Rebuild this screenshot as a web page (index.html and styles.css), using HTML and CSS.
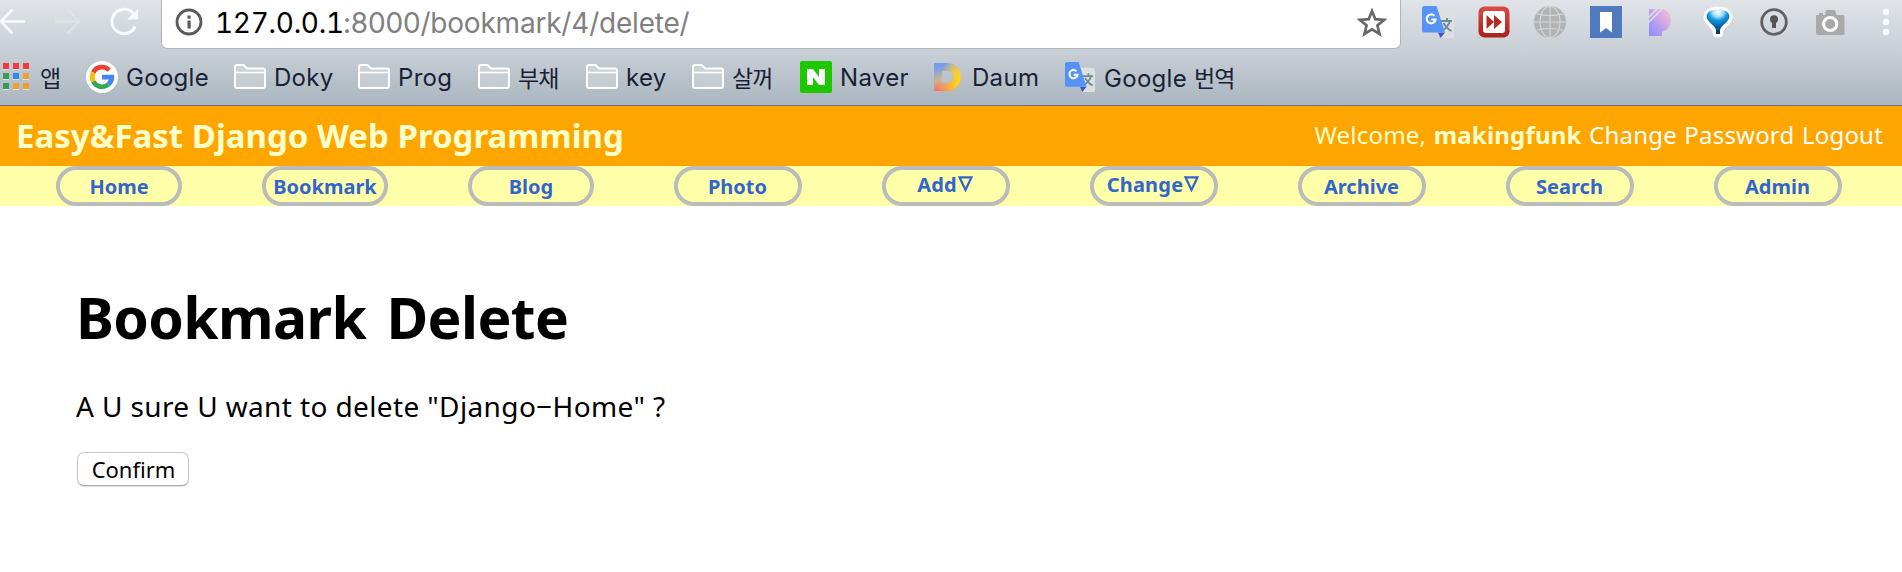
FILE: index.html
```
<!DOCTYPE html>
<html lang="ko">
<head>
<meta charset="utf-8">
<title>Bookmark Delete</title>
<link rel="stylesheet" href="styles.css">
</head>
<body>
<svg width="0" height="0" class="defs">
  <defs>
    <linearGradient id="gDaum" x1="0" y1="0" x2="0.35" y2="1"><stop offset=".15" stop-color="#6f9cf8"/><stop offset=".6" stop-color="#c9b58f"/><stop offset="1" stop-color="#ff5f5f"/></linearGradient>
    <linearGradient id="gDaum2" x1="0" y1="0" x2="1" y2=".3"><stop offset=".35" stop-color="#ffdc3c" stop-opacity="0"/><stop offset="1" stop-color="#ffd21c"/></linearGradient>
    <linearGradient id="gP" x1="1" y1="0" x2="0" y2="1"><stop offset=".15" stop-color="#f3b4dc"/><stop offset=".9" stop-color="#9290fb"/></linearGradient>
    <linearGradient id="gRed" x1="0" y1="0" x2="0" y2="1"><stop offset="0" stop-color="#dd4b43"/><stop offset="1" stop-color="#a9201b"/></linearGradient>
    <radialGradient id="gBall" cx=".5" cy=".12" r=".75"><stop offset="0" stop-color="#fff"/><stop offset=".3" stop-color="#a9defa"/><stop offset=".55" stop-color="#1298e0"/><stop offset="1" stop-color="#04599d"/></radialGradient>
    <symbol id="folder" viewBox="0 0 32 25"><path d="M1 3Q1 1 3 1H9.500L13 4.500H29Q31 4.500 31 6.500V22Q31 24 29 24H3Q1 24 1 22Z" fill="#fff" fill-opacity=".2" stroke="#fff" stroke-width="2"/><path d="M1 8.500H31" stroke="#fff" stroke-width="1.600"/></symbol>
    <symbol id="translate" viewBox="0 0 32 32"><path d="M14 6H30Q32 6 32 8V30Q32 32 30 32H19Z" fill="#dde0e1"/><path d="M19 15H30M25 12V15M28 15Q26 21 20 25M21.500 17Q25 23 29.500 25" fill="none" stroke="#6d8b92" stroke-width="1.900"/><path d="M16 26.500H23L18.500 32Z" fill="#3f54bf"/><path d="M2 0H14.500L23 26.500H2Q0 26.500 0 24.500V2Q0 0 2 0Z" fill="#5594f5"/><path d="M12.300 9.800A4.400 4.400 0 1 0 13.500 13.500H9.300" fill="none" stroke="#fff" stroke-width="2.200"/></symbol>
  </defs>
</svg>
<header class="browser">
  <div class="toolbar">
    <svg class="navs" width="162" height="49" viewBox="0 0 162 49" fill="none" stroke-width="2.600" stroke="#f8fafb"><path d="M25 21.500H1M12.500 9.500L.800 21.500L12.500 33.500"/><g stroke="#dfe3e6"><path d="M55 21.500H79M67.500 9.500L79.200 21.500L67.500 33.500"/></g><path d="M134.500 15A12.200 12.200 0 1 0 135.200 26.500" stroke-width="3"/><path d="M138 9V19.500H127Z" fill="#f8fafb" stroke="none"/></svg>
    <div class="omnibox">
      <svg class="info" width="28" height="28" viewBox="0 0 28 28"><circle cx="14" cy="14" r="12" fill="none" stroke="#5a5a5a" stroke-width="2.800"/><path d="M12.500 7.500h3.200v3.200h-3.200zM12.500 12.500h3.200v8h-3.200z" fill="#5a5a5a"/></svg>
      <span class="url"><span class="host">127.0.0.1</span><span class="path">:8000/bookmark/4/delete/</span></span>
      <svg class="star" width="30" height="29" viewBox="0 0 30 29"><path d="M15 3L18.300 11.200L27.200 11.800L20.400 17.500L22.600 26L15 21.300L7.400 26L9.600 17.500L2.800 11.800L11.700 11.200Z" fill="none" stroke="#686868" stroke-width="2.700"/></svg>
    </div>
    <div class="extensions">
      <svg width="32" height="32"><use href="#translate"/></svg>
      <svg width="32" height="32" viewBox="0 0 32 32"><rect x=".5" y=".5" width="31" height="31" rx="6" fill="url(#gRed)"/><rect x="5" y="5" width="22" height="22" rx="3" fill="#fff"/><path d="M8.500 9L16 16L8.500 23ZM16 9L24 16L16 23Z" fill="#b52c27"/></svg>
      <svg width="32" height="32" viewBox="0 0 32 32"><circle cx="16" cy="16" r="16" fill="#b3b3b3"/><g fill="none" stroke="#d5d9dc" stroke-width="1.100"><path d="M16 0V32M0 16H32M3 8Q16 11 29 8M3 24Q16 21 29 24"/><ellipse cx="16" cy="16" rx="10" ry="15.500"/></g></svg>
      <svg width="32" height="32" viewBox="0 0 32 32"><rect width="32" height="32" fill="#4f7abd"/><path d="M10 6H22V26.500L16 22L10 26.500Z" fill="#fff"/></svg>
      <svg width="32" height="32" viewBox="0 0 32 32"><path d="M3 3H17A12 12 0 0 1 17 25.500H16V30H3Z" fill="url(#gP)"/><path d="M2.500 11.500L11.500 2.500M2.500 16.500L16.500 2.500" stroke="#dde2e6" stroke-width="1.500"/></svg>
      <svg width="32" height="32" viewBox="0 0 32 32"><path d="M1.500 11.500C2 4 8 .500 16 .500S30 4 30.500 11.500C30.500 18 21 21 21 28Q20.500 31.500 16 31.500Q12 31.500 11 28C11 21 1.500 18 1.500 11.500Z" fill="#fff"/><path d="M4.500 10C5.500 5 10 3.500 16 3.500S26.500 5 27.500 10C27.500 16 19 19 18 24H14C13 19 4.500 16 4.500 10Z" fill="url(#gBall)"/><path d="M14 24H18V28H14Z" fill="#123b5c"/></svg>
      <svg width="32" height="32" viewBox="0 0 32 32"><circle cx="16" cy="16" r="12.300" fill="none" stroke="#616161" stroke-width="2.800"/><circle cx="16" cy="13.300" r="4" fill="#555"/><path d="M14 14H18V22H14Z" fill="#555"/></svg>
      <svg width="32" height="32" viewBox="0 0 32 32"><path d="M3 9H5V7H9V9H11L12 4H21L22.500 9H29Q30.500 9 30.500 11V27Q30.500 29 29 29H3.500Q2 29 2 27V10Q2 9 3 9Z" fill="#a9a9a9"/><circle cx="16.200" cy="18" r="6.600" fill="#a9a9a9" stroke="#fff" stroke-width="3"/></svg>
      <svg width="32" height="32" viewBox="0 0 32 32" fill="#f8fafb"><circle cx="16" cy="6" r="3.200"/><circle cx="16" cy="16" r="3.200"/><circle cx="16" cy="26" r="3.200"/></svg>
    </div>
  </div>
  <nav class="bookmarks">
    <a class="mark apps"><svg width="27" height="27" viewBox="0 0 27 27"><g fill="#e1e5e8"><path d="M0 1h6v6H0zM10 1h6v6h-6zM20 1h6v6h-6zM0 11h6v6H0zM10 11h6v6h-6zM20 11h6v6h-6zM0 21h6v6H0zM10 21h6v6h-6zM20 21h6v6h-6z"/></g><path d="M0 0h6v6H0zM10 0h6v6h-6zM20 0h6v6h-6z" fill="#f43b3b"/><path d="M0 10h6v6H0zM0 20h6v6H0z" fill="#3b9b5b"/><path d="M10 10h6v6h-6z" fill="#2a8bf2"/><path d="M20 10h6v6h-6zM10 20h6v6h-6zM20 20h6v6h-6z" fill="#f0a12b"/></svg><span class="ko">앱</span></a>
    <a class="mark google"><svg width="32" height="32" viewBox="0 0 32 32"><circle cx="16" cy="16" r="16" fill="#fff"/><g fill="none" stroke-width="4.800"><path d="M23.200 9.200A9.800 9.800 0 0 0 7.300 11.500" stroke="#ea4335"/><path d="M7.300 11.500A9.800 9.800 0 0 0 7.300 20.500" stroke="#fbbc05"/><path d="M7.300 20.500A9.800 9.800 0 0 0 22.300 23.500" stroke="#34a853"/><path d="M22.300 23.500A9.800 9.800 0 0 0 25.800 16.200H16" stroke="#4285f4"/></g></svg><span>Google</span></a>
    <a class="mark doky"><svg width="32" height="25"><use href="#folder"/></svg><span>Doky</span></a>
    <a class="mark prog"><svg width="32" height="25"><use href="#folder"/></svg><span>Prog</span></a>
    <a class="mark debt"><svg width="32" height="25"><use href="#folder"/></svg><span class="ko">부채</span></a>
    <a class="mark key"><svg width="32" height="25"><use href="#folder"/></svg><span>key</span></a>
    <a class="mark salkko"><svg width="32" height="25"><use href="#folder"/></svg><span class="ko">살꺼</span></a>
    <a class="mark naver"><svg width="32" height="32" viewBox="0 0 32 32"><rect width="32" height="32" rx="2" fill="#1ec800"/><path d="M7 8H13L19 16V8H25V24H19L13 16V24H7Z" fill="#fff"/></svg><span>Naver</span></a>
    <a class="mark daum"><svg width="27" height="28" viewBox="0 0 27 28"><path d="M0 0H13A14 14 0 0 1 13 28H0ZM8 8V20H13A6 6 0 0 0 13 8Z" fill="url(#gDaum)"/><path d="M0 0H13A14 14 0 0 1 13 28H0ZM8 8V20H13A6 6 0 0 0 13 8Z" fill="url(#gDaum2)"/></svg><span>Daum</span></a>
    <a class="mark trans"><svg width="30" height="30"><use href="#translate"/></svg><span>Google <span class="ko">번역</span></span></a>
  </nav>
</header>
<div class="banner">
  <div class="site">Easy&amp;Fast Django Web Programming</div>
  <div class="user"><span>Welcome,</span> <b>makingfunk</b> <a>Change Password</a> <a>Logout</a></div>
</div>
<nav class="menu">
  <a class="pill">Home</a>
  <a class="pill">Bookmark</a>
  <a class="pill">Blog</a>
  <a class="pill wide">Photo</a>
  <a class="pill wide drop">Add<svg width="15" height="16" viewBox="0 0 15 16"><path d="M1.500 1.300H13.500L7.500 14Z" fill="none" stroke="#36c" stroke-width="2.200"/></svg></a>
  <a class="pill wide drop">Change<svg width="15" height="16" viewBox="0 0 15 16"><path d="M1.500 1.300H13.500L7.500 14Z" fill="none" stroke="#36c" stroke-width="2.200"/></svg></a>
  <a class="pill wide">Archive</a>
  <a class="pill wide">Search</a>
  <a class="pill wide">Admin</a>
</nav>
<main class="content">
  <h1>Bookmark Delete</h1>
  <p>A U sure U want to delete "Django−Home" ?</p>
  <button class="confirm">Confirm</button>
</main>
</body>
</html>
```
FILE: styles.css
```
* { box-sizing: border-box; }
body { margin: 0; height: 572px; overflow: hidden; background: #fff; font-family: "Noto Sans", "Noto Sans CJK KR", sans-serif; color: #000; }
.defs { position: absolute; }
svg { display: block; flex: none; }
.browser { height: 106px; border-bottom: 1px solid #66707f; background: linear-gradient(#e0e4e8, #c5ccd3 55%, #aab6c0); font-family: Inter, "Noto Sans CJK KR", sans-serif; }
.toolbar { display: flex; height: 49px; align-items: flex-start; }
.omnibox { display: flex; width: 1240px; height: 49px; margin-left: -1px; padding: 0 30px 4px 13px; align-items: center; background: #fff; border: 1px solid #b2b5b8; border-top: 0; border-radius: 0 0 6px 6px; }
.url { flex: 1; margin-left: 12px; padding-top: 2px; font-size: 28px; line-height: 40px; white-space: nowrap; }
.host { display: inline-block; width: 128px; letter-spacing: -.3px; font-feature-settings: "tnum"; }
.path { color: #808080; letter-spacing: -.2px; }
.star { margin-right: -17px; }
.extensions { display: flex; gap: 24px; padding: 6px 0 0 21px; }

.bookmarks { display: flex; height: 56px; align-items: center; padding: 0 0 1px 3px; font-size: 24px; line-height: 32px; color: #182236; }
.mark { display: flex; flex: none; align-items: center; gap: 8px; white-space: nowrap; letter-spacing: .3px; }
.mark > span { padding-top: 2px; }
.mark > .ko { padding-top: 0; }
.ko { font-family: "Noto Sans CJK KR", sans-serif; font-size: 23px; letter-spacing: -1px; }
.apps { width: 83px; gap: 10px; }
.google { width: 148px; }
.doky { width: 124px; }
.prog { width: 120px; }
.debt { width: 108px; }
.key { width: 106px; }
.salkko { width: 108px; }
.naver { width: 134px; }
.daum { width: 131px; gap: 11px; }
.trans { gap: 9px; }

.banner { display: flex; height: 60px; align-items: center; justify-content: space-between; padding: 0 19px 2px 16px; background: #ffa500; color: #ffc; }
.site { font-size: 33px; font-weight: 700; }
.user { padding-bottom: 1px; font-size: 24px; word-spacing: 1px; letter-spacing: .2px; }
.user a { color: #fff; }
.menu { display: flex; height: 40px; padding-left: 56px; gap: 80px; background: #ffa; }
.pill { display: flex; flex: none; width: 126px; align-items: center; justify-content: center; border: 4px solid #bbb; border-radius: 20px; font-size: 20px; font-weight: 700; color: #36c; }
.pill.wide { width: 128px; padding-right: 1px; }
.pill.drop { padding: 0 2px 4px 0; gap: 1px; letter-spacing: .2px; }

.content { padding: 73px 76px; }
h1 { margin: 0; font-size: 57px; line-height: 76px; letter-spacing: -.6px; word-spacing: 6px; }
p { margin: 32px 0 0; font-size: 28px; line-height: 38px; letter-spacing: .38px; white-space: nowrap; }
.confirm { display: block; width: 112px; height: 34px; margin: 27px 0 0 1px; padding: 0 0 0 1px; border: 1px solid #c8c8c8; border-bottom-color: #aaa; border-radius: 7px; background: #fff; box-shadow: 0 1px 1px #ddd; font: 22px/30px "Noto Sans", sans-serif; color: #000; }
```
